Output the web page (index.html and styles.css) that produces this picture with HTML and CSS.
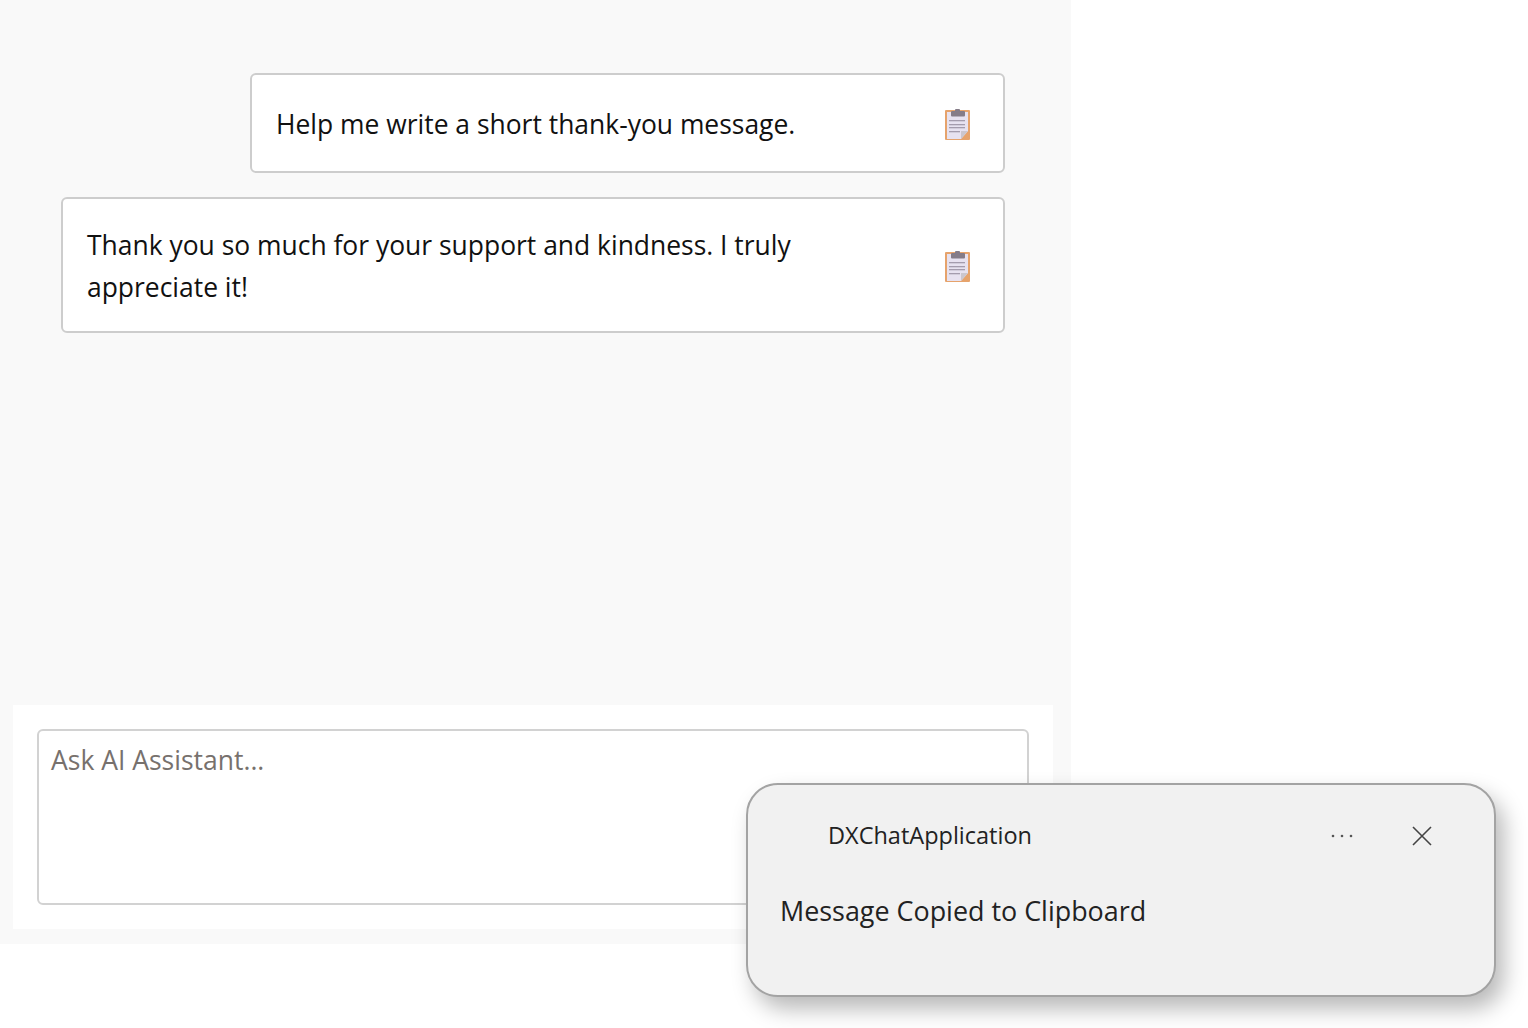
FILE: index.html
```html
<!DOCTYPE html>
<html lang="en">
<head>
<meta charset="utf-8">
<title>DXChatApplication</title>
<link rel="stylesheet" href="styles.css">
</head>
<body>
<svg class="defs" width="0" height="0" aria-hidden="true">
  <symbol id="clip" viewBox="0 0 26 32">
    <rect x="0" y="1" width="25" height="30" rx="1" fill="#e6a36c"/>
    <rect x="2" y="3" width="21" height="27" fill="#e7e2f0"/>
    <path d="M16 30 L23 22 L23 30 Z" fill="#e6a36c"/>
    <path d="M16 30 L16 22 L23 22 Z" fill="#cbc6ce"/>
    <rect x="6" y="2" width="14" height="5.5" rx="1" fill="#857c88"/>
    <rect x="10" y="0" width="5" height="3" rx="1" fill="#857c88"/>
    <rect x="4" y="11" width="16" height="1.3" fill="#a49cad"/>
    <rect x="4" y="15" width="16" height="1.3" fill="#a49cad"/>
    <rect x="4" y="18" width="16" height="1.3" fill="#a49cad"/>
    <rect x="4" y="22" width="11" height="1.3" fill="#a49cad"/>
  </symbol>
</svg>
<main class="chat">
  <section class="messages">
    <article class="bubble bubble-user">
      <p class="bubble-text">Help me write a short thank-you message.</p>
      <svg class="copy-icon"><use href="#clip"/></svg>
    </article>
    <article class="bubble bubble-ai">
      <p class="bubble-text">Thank you so much for your support and kindness. I truly appreciate it!</p>
      <svg class="copy-icon"><use href="#clip"/></svg>
    </article>
  </section>
  <section class="composer">
    <textarea class="composer-input" placeholder="Ask AI Assistant..."></textarea>
  </section>
</main>
<aside class="toast">
  <header class="toast-head">
    <span class="toast-app">DXChatApplication</span>
    <span class="toast-actions">
      <svg class="toast-more" width="24" height="4" viewBox="0 0 24 4"><circle cx="2" cy="2" r="1.3"/><circle cx="11" cy="2" r="1.3"/><circle cx="20" cy="2" r="1.3"/></svg>
      <svg class="toast-close" width="20" height="20" viewBox="0 0 20 20"><path d="M1 1 L19 19 M19 1 L1 19"/></svg>
    </span>
  </header>
  <p class="toast-msg">Message Copied to Clipboard</p>
</aside>
</body>
</html>
```
FILE: styles.css
```css
* { box-sizing: border-box; }
html, body { margin: 0; padding: 0; background: #fff; }
body {
  width: 1528px;
  height: 1028px;
  overflow: hidden;
  font-family: "Open Sans", "Noto Sans", sans-serif;
  color: #1a1a1a;
}
.defs { position: absolute; }
.chat {
  width: 1071px;
  height: 944px;
  background: #f9f9f9;
  display: flex;
  flex-direction: column;
  padding: 73px 18px 15px 13px;
}
.messages {
  flex: 1;
  display: flex;
  flex-direction: column;
  align-items: flex-end;
  gap: 24px;
  padding-right: 48px;
}
.bubble {
  display: flex;
  align-items: center;
  justify-content: space-between;
  background: #fff;
  border: 2px solid #cdcdcd;
  border-radius: 6px;
  padding: 0 32px 0 24px;
}
.bubble-user { width: 755px; height: 100px; }
.bubble-ai { width: 944px; height: 136px; }
.bubble-text {
  margin: 2px 0 0;
  width: 740px;
  font-size: 26.45px;
  line-height: 42px;
  color: #111;
}
.copy-icon { width: 26px; height: 32px; flex: none; margin-top: 4px; }
.composer {
  height: 224px;
  width: 1040px;
  background: #fff;
  padding: 24px;
}
.composer-input {
  display: block;
  width: 992px;
  height: 176px;
  border: 2px solid #d2d2d2;
  border-radius: 6px;
  padding: 11px 12px;
  margin: 0;
  resize: none;
  outline: none;
  background: #fff;
  font-family: inherit;
  font-size: 26.5px;
  line-height: 36px;
}
.composer-input::placeholder { color: #77716d; opacity: 1; }
.toast {
  position: absolute;
  left: 746px;
  top: 783px;
  width: 750px;
  height: 214px;
  background: #f1f1f1;
  border: 2px solid #a3a3a3;
  border-radius: 32px;
  box-shadow: 8px 12px 22px rgba(0, 0, 0, 0.28);
  padding: 0 62px 0 32px;
}
.toast-head {
  display: flex;
  align-items: center;
  justify-content: space-between;
  height: 101px;
  padding-left: 48px;
}
.toast-app { font-size: 23.5px; line-height: 30px; margin-bottom: 2px; color: #222; }
.toast-actions { display: flex; align-items: center; gap: 56px; }
.toast-more { fill: #555; margin-right: 1px; }
.toast-close { stroke: #444; stroke-width: 1.6; fill: none; }
.toast-msg {
  margin: 5px 0 0;
  font-size: 26.9px;
  line-height: 40px;
  color: #222;
}
```
